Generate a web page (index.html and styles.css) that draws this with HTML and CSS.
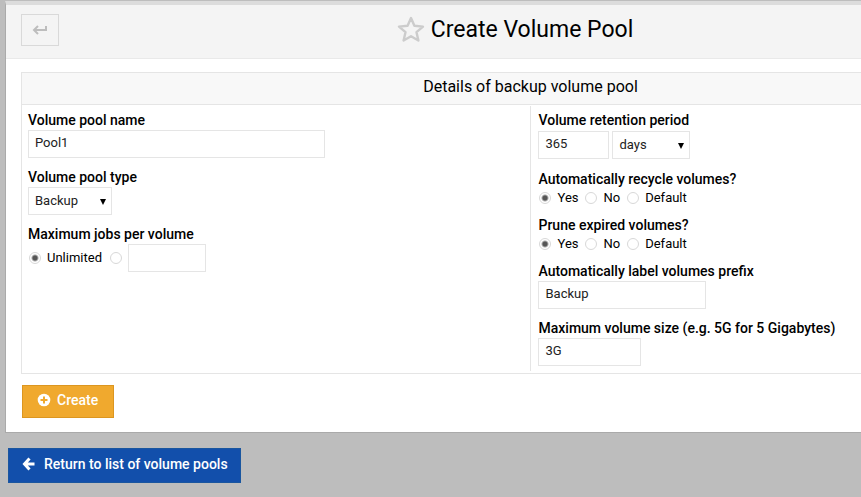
FILE: index.html
```html
<!DOCTYPE html>
<html lang="en">
<head>
<meta charset="utf-8">
<title>Create Volume Pool</title>
<link rel="stylesheet" href="styles.css">
</head>
<body>
<div class="page">
  <main class="panel">
    <header class="panel-header">
      <button class="back" type="button" aria-label="Back">
        <svg width="16" height="12" viewBox="0 0 16 12" fill="none" stroke="currentColor" stroke-width="2"><path d="M14 2v4H3M6 2L2 6l4 4"/></svg>
      </button>
      <h1 class="title">
        <svg width="28" height="28" viewBox="0 0 28 28" fill="none" stroke="currentColor" stroke-width="2.400" stroke-linejoin="round"><path d="M14 2l3.400 7.800 8.600.8-6.500 5.600 1.900 8.300L14 20.200l-7.400 4.300 1.900-8.300L2 10.600l8.600-.8z"/></svg>
        <span>Create Volume Pool</span>
      </h1>
    </header>
    <form class="form">
      <section class="details">
        <h2 class="caption">Details of backup volume pool</h2>
        <div class="columns">
          <div class="column">
            <div class="field">
              <label class="label" for="name">Volume pool name</label>
              <div class="row"><input class="text name" id="name" type="text" value="Pool1"></div>
            </div>
            <div class="field">
              <label class="label" for="type">Volume pool type</label>
              <div class="row"><span class="select"><select class="type" id="type"><option>Backup</option></select></span></div>
            </div>
            <fieldset class="field">
              <legend class="label">Maximum jobs per volume</legend>
              <div class="row jobs-row">
                <label class="choice"><input type="radio" name="jobs" checked>Unlimited</label>
                <input type="radio" name="jobs" aria-label="Limited">
                <input class="text jobs" type="text" aria-label="Maximum jobs">
              </div>
            </fieldset>
          </div>
          <div class="column">
            <div class="field">
              <label class="label" for="retention">Volume retention period</label>
              <div class="row period">
                <input class="text retention" id="retention" type="text" value="365">
                <span class="select"><select class="unit" aria-label="Retention unit"><option>days</option></select></span>
              </div>
            </div>
            <fieldset class="field">
              <legend class="label">Automatically recycle volumes?</legend>
              <div class="row choices">
                <label class="choice"><input type="radio" name="recycle" checked>Yes</label>
                <label class="choice"><input type="radio" name="recycle">No</label>
                <label class="choice"><input type="radio" name="recycle">Default</label>
              </div>
            </fieldset>
            <fieldset class="field">
              <legend class="label">Prune expired volumes?</legend>
              <div class="row choices">
                <label class="choice"><input type="radio" name="prune" checked>Yes</label>
                <label class="choice"><input type="radio" name="prune">No</label>
                <label class="choice"><input type="radio" name="prune">Default</label>
              </div>
            </fieldset>
            <div class="field">
              <label class="label" for="prefix">Automatically label volumes prefix</label>
              <div class="row"><input class="text prefix" id="prefix" type="text" value="Backup"></div>
            </div>
            <div class="field">
              <label class="label" for="size">Maximum volume size (e.g. 5G for 5 Gigabytes)</label>
              <div class="row"><input class="text size" id="size" type="text" value="3G"></div>
            </div>
          </div>
        </div>
      </section>
      <button class="button create" type="button">
        <svg width="14" height="14" viewBox="0 0 14 14"><circle cx="7" cy="7" r="6.3" fill="currentColor"/><path d="M7 3.5v7M3.5 7h7" stroke="#f0a92e" stroke-width="2"/></svg>
        Create
      </button>
    </form>
  </main>
  <a class="button return" href="#">
    <svg width="14" height="14" viewBox="0 0 14 14" fill="none" stroke="currentColor" stroke-width="3"><path d="M12.5 7H3M7.5 1.5L2.5 7l5 5.500"/></svg>
    Return to list of volume pools
  </a>
</div>
</body>
</html>
```
FILE: styles.css
```css
* {
  box-sizing: border-box;
}

body {
  margin: 0;
  background: #bdbdbd;
  color: #000;
  font: 13px/18px Roboto, "Liberation Sans", sans-serif;
}

.page {
  padding: 1px 0 14px 5px;
}

.panel {
  border: 1px solid #aaa;
  border-top: 4px solid #dcdcdc;
  border-right: 0;
  background: #fff;
}

.panel-header {
  display: flex;
  align-items: flex-start;
  height: 54px;
  padding: 9px 0 9px 15px;
  border-bottom: 1px solid #e9e9e9;
  background: #f4f4f4;
}

.back {
  display: flex;
  align-items: center;
  justify-content: center;
  width: 38px;
  height: 32px;
  padding: 0;
  border: 1px solid #d9d9d9;
  background: transparent;
  color: #bdbdbd;
}

.title {
  display: flex;
  flex: 1;
  align-items: center;
  justify-content: center;
  gap: 6px;
  margin: 0;
  padding-left: 110px;
  font-size: 23px;
  font-weight: 400;
  line-height: 32px;
}

.title svg {
  color: #ccc;
}

.form {
  padding: 13px 0 14px 15px;
}

.details {
  margin-bottom: 11px;
  border: 1px solid #e5e5e5;
  border-right: 0;
}

.caption {
  margin: 0;
  padding: 4px 0 7px 178px;
  border-bottom: 1px solid #e5e5e5;
  background: #f8f8f8;
  font-size: 16px;
  font-weight: 400;
  line-height: 20px;
  text-align: center;
}

.columns {
  display: grid;
  grid-template-columns: 20fr 13fr;
  padding: 1px 0 2px;
}

.column {
  display: flex;
  flex-direction: column;
  gap: 10px;
  padding: 5px 6px;
}

.column + .column {
  padding-left: 7px;
  border-left: 1px solid #e5e5e5;
}

.field {
  min-width: 0;
  margin: 0;
  padding: 0;
  border: 0;
}

.label {
  display: block;
  padding: 0;
  font-size: 14px;
  font-weight: 500;
  line-height: 19px;
}

.row {
  display: flex;
  align-items: center;
  gap: 3px;
}

.period {
  padding: 1px 0;
}

.choices {
  gap: 4px;
  height: 17px;
}

.jobs-row {
  gap: 5px;
}

.choice {
  display: flex;
  align-items: center;
  gap: 5px;
  padding-right: 2px;
}

.text,
select {
  height: 28px;
  margin: 0;
  border: 1px solid #e5e5e5;
  border-radius: 0;
  background: #fff;
  color: #222;
  font: inherit;
}

.text {
  padding: 0 6px 3px;
}

.name { width: 297px; }
.jobs { width: 78px; }
.retention { width: 71px; }
.prefix { width: 168px; }
.size { width: 103px; }
.type { width: 84px; }
.unit { width: 78px; }

select {
  padding: 0 6px;
  appearance: none;
}

.select {
  position: relative;
}

.select select {
  display: block;
}

.select::after {
  position: absolute;
  top: 12px;
  right: 6px;
  border: 3px solid transparent;
  border-top: 6px solid #000;
  border-bottom: 0;
  content: "";
  pointer-events: none;
}

input[type="radio"] {
  width: 12px;
  height: 12px;
  margin: 0 1px;
  border: 1px solid #d8d8d8;
  border-radius: 50%;
  background: #fff;
  appearance: none;
}

input[type="radio"]:checked {
  background: radial-gradient(circle, #555 0 2px, #fff 4px);
}

.button {
  display: inline-flex;
  align-items: center;
  border: 1px solid;
  color: #fff;
  font: 500 14px/20px Roboto, "Liberation Sans", sans-serif;
  text-decoration: none;
}

.create {
  display: flex;
  gap: 6px;
  margin-left: 1px;
  padding: 4px 15px 7px 14px;
  border-color: #dc9620;
  background: #f0a92e;
}

.return {
  gap: 8px;
  margin: 15px 3px 0;
  padding: 5px 12px 8px 13px;
  border-color: #1a569f;
  background: #124fab;
}
```
